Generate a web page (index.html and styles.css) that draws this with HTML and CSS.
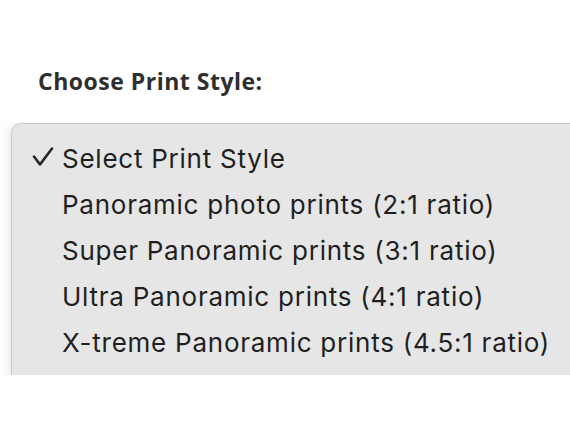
FILE: index.html
```html
<!DOCTYPE html>
<html lang="en">
<head>
<meta charset="UTF-8">
<meta name="viewport" content="width=device-width, initial-scale=1.0">
<title>Choose Print Style</title>
<link rel="stylesheet" href="styles.css">
</head>
<body>

<h2 class="label">Choose Print Style:</h2>

<div class="menu-clip">
  <ul class="menu">
    <li class="item selected">
      <svg class="check" width="22" height="20" viewBox="0 0 22 20">
        <path d="M2 9.5 L8 17.5 L20 1.5" fill="none" stroke="#262626" stroke-width="2.6" stroke-linecap="round" stroke-linejoin="round"/>
      </svg>
      Select Print Style
    </li>
    <li class="item">Panoramic photo prints (2:1 ratio)</li>
    <li class="item">Super Panoramic prints (3:1 ratio)</li>
    <li class="item">Ultra Panoramic prints (4:1 ratio)</li>
    <li class="item">X-treme Panoramic prints (4.5:1 ratio)</li>
  </ul>
</div>

</body>
</html>
```

FILE: styles.css
```css
body {
  margin: 0;
  padding: 0;
  background-color: #ffffff;
  overflow: hidden;
}
.label {
  font-family: "Open Sans", Arial, sans-serif;
  font-weight: 700;
  font-size: 23px;
  letter-spacing: 0.5px;
  color: #2e2e2e;
  margin: 0;
  padding: 66px 0 0 38px;
  line-height: 30px;
}
.menu-clip {
  margin-top: 27px;
  height: 252px;
  overflow: hidden;
  padding-left: 11px;
}
.menu {
  list-style: none;
  margin: 0;
  padding: 12px 0 0 0;
  width: 600px;
  height: 270px;
  box-sizing: border-box;
  background-color: #e6e6e6;
  border: 1px solid #c9c9c9;
  border-radius: 10px;
  box-shadow: 0 0 12px rgba(0, 0, 0, 0.13);
  font-family: Inter, "Liberation Sans", sans-serif;
  font-size: 26px;
  letter-spacing: 0.75px;
  color: #1f1f1f;
}
.item {
  position: relative;
  height: 46px;
  line-height: 46px;
  padding-left: 50px;
}
.check {
  position: absolute;
  left: 20px;
  top: 11px;
}
```
